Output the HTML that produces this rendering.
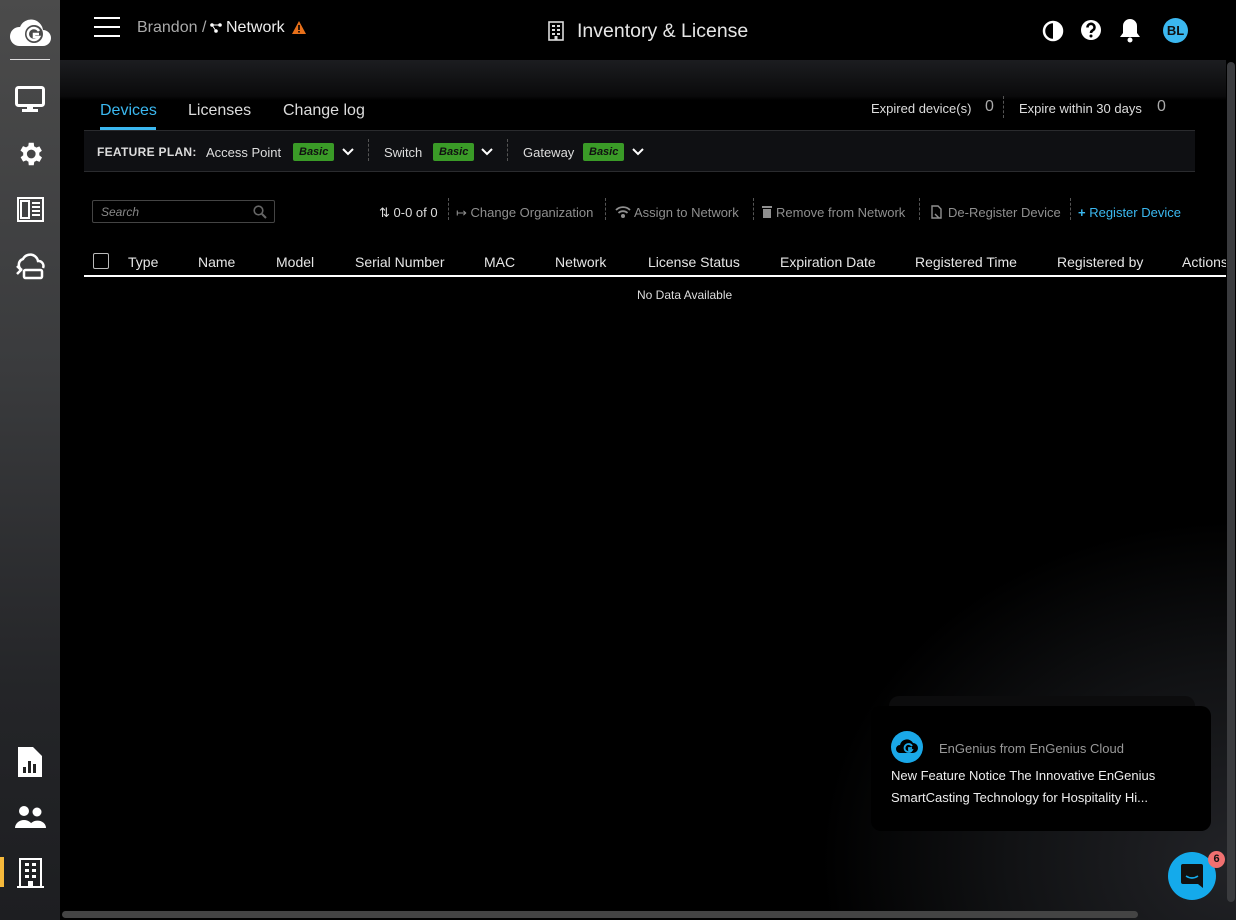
<!DOCTYPE html>
<html><head><meta charset="utf-8"><style>
*{margin:0;padding:0;box-sizing:border-box}
body{width:1236px;height:920px;overflow:hidden;background:#000;font-family:"Liberation Sans",sans-serif;color:#ddd;position:relative}
.a{position:absolute;white-space:nowrap}
#side{left:0;top:0;width:60px;height:920px;background:linear-gradient(#4b4b4b 0%,#3a3b3d 40%,#242528 75%,#1d1e21 100%)}
#main{left:60px;top:60px;width:1176px;height:860px;background:radial-gradient(ellipse 420px 340px at 1180px 800px,#222327 0%,#111214 55%,#000 100%)}
.band{left:60px;top:60px;width:1166px;height:40px;background:linear-gradient(#1c1d20,#0a0a0b 90%,#000)}
.ico{fill:#fff}
.t13{font-size:13px}
.hd{font-size:14px;color:#e6e6e6;top:254px}
.basic{background:#3a9b27;color:#111;font-weight:bold;font-style:italic;font-size:11px;padding:3px 6px;border-radius:2px;top:143px;height:18px}
.dash{border-left:1px dashed #555;height:22px}
.tb{font-size:13px;color:#8f8f8f;top:205px}
</style></head><body>
<div class="a" id="side"></div>
<div class="a" id="main"></div>
<div class="a band"></div>

<svg class="a" style="left:9px;top:12px" width="42" height="36" viewBox="0 0 42 36"><path class="ico" d="M10 34h24a8 8 0 0 0 0-16a12 12 0 0 0-23-3a9 9 0 0 0-1 19z"/><circle cx="25" cy="22" r="9" fill="#4b4b4b"/><path d="M30 19a6 6 0 1 0 0 6h-5v-3h5" stroke="#fff" stroke-width="2.5" fill="none"/></svg>
<div class="a" style="left:10px;top:59px;width:40px;height:1px;background:#ddd"></div>
<svg class="a" style="left:15px;top:86px" width="30" height="28" viewBox="0 0 30 28"><rect x="1.5" y="1.5" width="27" height="18" rx="2" fill="none" stroke="#fff" stroke-width="3"/><rect x="12" y="20" width="6" height="4" fill="#fff"/><rect x="7" y="23" width="16" height="3" fill="#fff"/></svg>
<svg class="a" style="left:15px;top:139px" width="30" height="30" viewBox="0 0 24 24"><path class="ico" d="M19.4 13a7.8 7.8 0 0 0 0-2l2.1-1.6-2-3.5-2.5 1a7 7 0 0 0-1.7-1L15 3h-4l-.4 2.7a7 7 0 0 0-1.7 1l-2.5-1-2 3.5L6.6 11a7.8 7.8 0 0 0 0 2l-2.1 1.6 2 3.5 2.5-1a7 7 0 0 0 1.7 1L11 21h4l.4-2.7a7 7 0 0 0 1.7-1l2.5 1 2-3.5zM13 15.5a3.5 3.5 0 1 1 0-7a3.5 3.5 0 0 1 0 7z"/></svg>
<svg class="a" style="left:17px;top:197px" width="27" height="25" viewBox="0 0 27 25"><rect x="1" y="1" width="25" height="23" fill="none" stroke="#fff" stroke-width="2"/><rect x="4" y="4" width="8" height="17" fill="none" stroke="#fff" stroke-width="2"/><path d="M15 6h8M15 10h8M15 14h8M15 18h8" stroke="#fff" stroke-width="2"/></svg>
<svg class="a" style="left:14px;top:252px" width="32" height="28" viewBox="0 0 32 28"><path d="M8 18a6 6 0 0 1 1-11a8 8 0 0 1 15 2a5 5 0 0 1 5 7" fill="none" stroke="#fff" stroke-width="2.5"/><path d="M3 14l4 4-4 4" fill="none" stroke="#fff" stroke-width="2.5"/><rect x="10" y="18" width="18" height="8" rx="1.5" fill="none" stroke="#fff" stroke-width="2.5"/></svg>
<svg class="a" style="left:18px;top:747px" width="24" height="30" viewBox="0 0 24 30"><path class="ico" d="M0 0h15l9 9v21H0z"/><rect x="5" y="20" width="3" height="6" fill="#222"/><rect x="10" y="14" width="3" height="12" fill="#222"/><rect x="15" y="17" width="3" height="9" fill="#222"/></svg>
<svg class="a" style="left:15px;top:806px" width="31" height="22" viewBox="0 0 31 22"><circle cx="9" cy="5" r="5" fill="#fff"/><circle cx="22" cy="6" r="4.5" fill="#fff"/><path d="M0 22a9 8 0 0 1 18 0z" fill="#fff"/><path d="M14 22a8 7 0 0 1 17 0z" fill="#fff"/></svg>
<div class="a" style="left:0;top:857px;width:4px;height:30px;background:#f6b93b"></div>
<svg class="a" style="left:17px;top:858px" width="27" height="30" viewBox="0 0 27 30"><rect x="3" y="1" width="21" height="28" fill="none" stroke="#fff" stroke-width="2"/><path d="M0 29h27" stroke="#fff" stroke-width="2"/><g fill="#fff"><rect x="8" y="5" width="4" height="3"/><rect x="15" y="5" width="4" height="3"/><rect x="8" y="11" width="4" height="3"/><rect x="15" y="11" width="4" height="3"/><rect x="8" y="17" width="4" height="3"/><rect x="15" y="17" width="4" height="3"/><rect x="11" y="23" width="5" height="6"/></g></svg>

<div class="a" style="left:94px;top:17px;width:26px;height:2px;background:#fff;box-shadow:0 9px 0 #fff,0 18px 0 #fff"></div>
<div class="a" style="left:137px;top:19px;font-size:16px;color:#aaa">Brandon /</div>
<svg class="a" style="left:210px;top:23px" width="12" height="10" viewBox="0 0 12 10"><circle cx="2" cy="2" r="1.8" fill="#fff"/><circle cx="10" cy="2" r="1.8" fill="#fff"/><circle cx="6" cy="8" r="1.8" fill="#fff"/><path d="M2 2h8M2 2l4 6" stroke="#fff"/></svg>
<div class="a" style="left:226px;top:19px;font-size:16px;color:#eee">Network</div>
<svg class="a" style="left:292px;top:21px" width="14" height="13" viewBox="0 0 14 13"><path d="M7 0l7 13H0z" fill="#e8701a"/><rect x="6.2" y="4" width="1.6" height="5" fill="#000"/><rect x="6.2" y="10" width="1.6" height="1.6" fill="#000"/></svg>
<svg class="a" style="left:548px;top:21px" width="16" height="20" viewBox="0 0 16 20"><rect x="1" y="1" width="14" height="18" fill="none" stroke="#ddd" stroke-width="1.6"/><g fill="#ddd"><rect x="4" y="4" width="3" height="2"/><rect x="9" y="4" width="3" height="2"/><rect x="4" y="8" width="3" height="2"/><rect x="9" y="8" width="3" height="2"/><rect x="4" y="12" width="3" height="2"/><rect x="9" y="12" width="3" height="2"/><rect x="6.5" y="15" width="3" height="4"/></g></svg>
<div class="a" style="left:577px;top:20px;font-size:19.5px;color:#e6e6e6">Inventory &amp; License</div>
<svg class="a" style="left:1042px;top:20px" width="22" height="22" viewBox="0 0 22 22"><circle cx="11" cy="11" r="9" fill="none" stroke="#fff" stroke-width="2.5"/><path d="M11 2a9 9 0 0 1 0 18z" fill="#fff"/></svg>
<svg class="a" style="left:1080px;top:19px" width="22" height="22" viewBox="0 0 22 22"><circle cx="11" cy="11" r="10" fill="#fff"/><path d="M7.5 8.5a3.5 3.5 0 1 1 5 3c-1 .6-1.5 1-1.5 2.5" stroke="#000" stroke-width="2.6" fill="none"/><circle cx="11" cy="17" r="1.5"/></svg>
<svg class="a" style="left:1118px;top:17px" width="24" height="26" viewBox="0 0 24 26"><path d="M12 2a7 7 0 0 0-7 7v7l-3 4h20l-3-4V9a7 7 0 0 0-7-7z" fill="#fff"/><circle cx="12" cy="23" r="2.5" fill="#fff"/></svg>
<div class="a" style="left:1163px;top:18px;width:25px;height:25px;border-radius:50%;background:#3bb8f0;color:#111;font-weight:bold;font-size:13px;text-align:center;line-height:25px">BL</div>

<div class="a" style="left:100px;top:102px;font-size:16px;color:#3bb8f0">Devices</div>
<div class="a" style="left:100px;top:127px;width:56px;height:3px;background:#3bb8f0"></div>
<div class="a" style="left:188px;top:102px;font-size:16px;color:#ddd">Licenses</div>
<div class="a" style="left:283px;top:102px;font-size:16px;color:#ddd">Change log</div>
<div class="a t13" style="left:871px;top:101px;color:#ddd">Expired device(s)</div>
<div class="a" style="left:985px;top:98px;font-size:16px;color:#aaa">0</div>
<div class="a dash" style="left:1003px;top:96px"></div>
<div class="a t13" style="left:1019px;top:101px;color:#ddd">Expire within 30 days</div>
<div class="a" style="left:1157px;top:98px;font-size:16px;color:#aaa">0</div>

<div class="a" style="left:84px;top:130px;width:1111px;height:42px;background:#0f1013;border-top:1px solid #2a2b2e;border-bottom:1px solid #2a2b2e"></div>
<div class="a" style="left:97px;top:145px;font-size:12px;font-weight:bold;color:#ddd;letter-spacing:.3px">FEATURE PLAN:</div>
<div class="a t13" style="left:206px;top:145px;color:#ddd">Access Point</div>
<div class="a basic" style="left:293px">Basic</div>
<svg class="a" style="left:342px;top:148px" width="12" height="8"><path d="M1 1l5 5 5-5" stroke="#fff" stroke-width="2" fill="none"/></svg>
<div class="a dash" style="left:368px;top:139px"></div>
<div class="a t13" style="left:384px;top:145px;color:#ddd">Switch</div>
<div class="a basic" style="left:433px">Basic</div>
<svg class="a" style="left:481px;top:148px" width="12" height="8"><path d="M1 1l5 5 5-5" stroke="#fff" stroke-width="2" fill="none"/></svg>
<div class="a dash" style="left:507px;top:139px"></div>
<div class="a t13" style="left:523px;top:145px;color:#ddd">Gateway</div>
<div class="a basic" style="left:583px">Basic</div>
<svg class="a" style="left:632px;top:148px" width="12" height="8"><path d="M1 1l5 5 5-5" stroke="#fff" stroke-width="2" fill="none"/></svg>

<div class="a" style="left:92px;top:200px;width:183px;height:23px;border:1px solid #444;border-radius:2px"></div>
<div class="a" style="left:101px;top:205px;font-size:12px;font-style:italic;color:#888">Search</div>
<svg class="a" style="left:253px;top:205px" width="14" height="14"><circle cx="5.5" cy="5.5" r="4.3" stroke="#666" stroke-width="1.6" fill="none"/><path d="M9 9l4 4" stroke="#666" stroke-width="2"/></svg>
<div class="a t13" style="left:379px;top:205px;color:#ddd">⇅ 0-0 of 0</div>
<div class="a dash" style="left:448px;top:198px"></div>
<div class="a tb" style="left:456px">↦ Change Organization</div>
<div class="a dash" style="left:605px;top:198px"></div>
<svg class="a" style="left:615px;top:205px" width="16" height="14" viewBox="0 0 16 14"><path d="M1 5a10 10 0 0 1 14 0M3.5 8a6.5 6.5 0 0 1 9 0" stroke="#8f8f8f" stroke-width="1.8" fill="none"/><circle cx="8" cy="11" r="2" fill="#8f8f8f"/></svg>
<div class="a tb" style="left:634px">Assign to Network</div>
<div class="a dash" style="left:753px;top:198px"></div>
<svg class="a" style="left:762px;top:206px" width="10" height="12" viewBox="0 0 10 12"><rect x="0" y="0" width="10" height="2" fill="#8f8f8f"/><rect x="1" y="3" width="8" height="9" fill="#8f8f8f"/></svg>
<div class="a tb" style="left:776px">Remove from Network</div>
<div class="a dash" style="left:919px;top:198px"></div>
<svg class="a" style="left:931px;top:205px" width="11" height="14" viewBox="0 0 11 14"><path d="M1 1h6l3 3v9H1z" stroke="#8f8f8f" stroke-width="1.4" fill="none"/><path d="M4 9l4 4" stroke="#8f8f8f" stroke-width="1.4"/></svg>
<div class="a tb" style="left:948px">De-Register Device</div>
<div class="a dash" style="left:1070px;top:198px"></div>
<div class="a tb" style="left:1078px;color:#3bb8f0"><b>+</b> Register Device</div>

<div class="a" style="left:93px;top:253px;width:16px;height:16px;border:1.5px solid #bbb;border-radius:2px"></div>
<div class="a hd" style="left:128px">Type</div>
<div class="a hd" style="left:198px">Name</div>
<div class="a hd" style="left:276px">Model</div>
<div class="a hd" style="left:355px">Serial Number</div>
<div class="a hd" style="left:484px">MAC</div>
<div class="a hd" style="left:555px">Network</div>
<div class="a hd" style="left:648px">License Status</div>
<div class="a hd" style="left:780px">Expiration Date</div>
<div class="a hd" style="left:915px">Registered Time</div>
<div class="a hd" style="left:1057px">Registered by</div>
<div class="a hd" style="left:1182px;width:44px;overflow:hidden">Actions</div>
<div class="a" style="left:84px;top:275px;width:1142px;height:2px;background:#fff"></div>
<div class="a" style="left:637px;top:288px;font-size:12px;color:#ddd">No Data Available</div>

<div class="a" style="left:1227px;top:62px;width:8px;height:840px;background:#3a3b3e;border-radius:4px"></div>
<div class="a" style="left:62px;top:911px;width:1076px;height:7px;background:#444;border-radius:4px"></div>

<div class="a" style="left:889px;top:696px;width:306px;height:30px;background:#0c0c0d;border-radius:10px"></div>
<div class="a" style="left:871px;top:706px;width:340px;height:125px;background:#000;border-radius:10px"></div>
<svg class="a" style="left:891px;top:731px" width="32" height="32" viewBox="0 0 32 32"><circle cx="16" cy="16" r="16" fill="#1aa8e8"/><path d="M9 22h13a5 5 0 0 0 0-10a7 7 0 0 0-13 2a4 4 0 0 0 0 8z" fill="#000"/><path d="M21 15a4 4 0 1 0 0 4h-3v-2h3" stroke="#1aa8e8" stroke-width="1.8" fill="none"/></svg>
<div class="a t13" style="left:939px;top:741px;color:#999">EnGenius from EnGenius Cloud</div>
<div class="a t13" style="left:891px;top:768px;color:#eee">New Feature Notice The Innovative EnGenius</div>
<div class="a t13" style="left:891px;top:790px;color:#eee">SmartCasting Technology for Hospitality Hi...</div>
<div class="a" style="left:1168px;top:852px;width:48px;height:48px;border-radius:50%;background:#14aaeb"></div>
<svg class="a" style="left:1181px;top:864px" width="22" height="24" viewBox="0 0 22 24"><path d="M2 0h18a2 2 0 0 1 2 2v22l-5-4H2a2 2 0 0 1-2-2V2a2 2 0 0 1 2-2z" fill="#111"/><path d="M5 12q6 4 12 0" stroke="#14aaeb" stroke-width="1.6" fill="none"/></svg>
<div class="a" style="left:1208px;top:851px;width:17px;height:17px;border-radius:50%;background:#f07070;color:#111;font-size:11px;font-weight:bold;text-align:center;line-height:17px">6</div>
</body></html>
